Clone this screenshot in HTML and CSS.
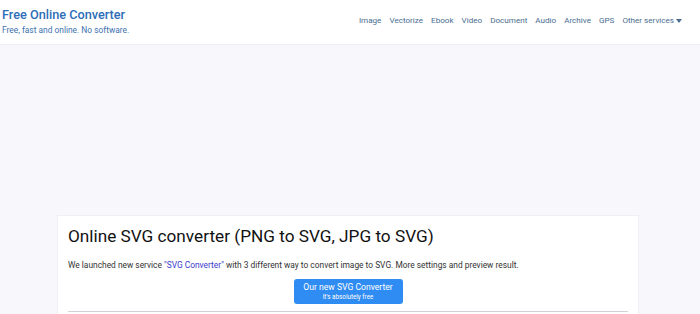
FILE: index.html
```html
<!DOCTYPE html>
<html>
<head>
<meta charset="utf-8">
<link rel="stylesheet" href="styles.css">
</head>
<body>
<header class="topbar">
  <div class="brand">
    <a class="brand-name" href="#">Free Online Converter</a>
    <div class="brand-tag">Free, fast and online. No software.</div>
  </div>
  <nav class="menu">
    <a href="#">Image</a>
    <a href="#">Vectorize</a>
    <a href="#">Ebook</a>
    <a href="#">Video</a>
    <a href="#">Document</a>
    <a href="#">Audio</a>
    <a href="#">Archive</a>
    <a href="#">GPS</a>
    <a href="#" class="dropdown">Other services<span class="caret"></span></a>
  </nav>
</header>
<div class="ad-space"></div>
<main class="card">
  <h1 class="title">Online SVG converter (PNG to SVG, JPG to SVG)</h1>
  <p class="lead">We launched new service <a href="#">"SVG Converter"</a> with 3 different way to convert image to SVG. More settings and preview result.</p>
  <div class="cta-row">
    <a class="cta" href="#">Our new SVG Converter<small>It's absolutely free</small></a>
  </div>
  <div class="divider"></div>
</main>
</body>
</html>
```
FILE: styles.css
```css
* { box-sizing: border-box; }
html, body { margin: 0; padding: 0; }
body {
  background: #f8f8fc;
  font-family: "Roboto", "Open Sans", sans-serif;
  color: #212529;
  overflow: hidden;
  height: 314px;
}
a { text-decoration: none; }
.topbar {
  height: 45px;
  background: #fff;
  border-bottom: 1px solid #eeeef4;
  display: flex;
  justify-content: space-between;
  align-items: flex-start;
  padding: 0 18px 0 2px;
}
.brand { padding-top: 6px; }
.brand-name {
  display: block;
  color: #2d6db8;
  font-size: 12.7px;
  font-weight: 500;
  line-height: 17px;
}
.brand-tag {
  color: #3d72b0;
  font-size: 8.4px;
  line-height: 12px;
  margin-top: 1px;
}
.menu {
  display: flex;
  gap: 8px;
  padding-top: 14px;
  font-size: 8.1px;
}
.menu a { color: #4a6d90; line-height: 12px; }
.caret {
  display: inline-block;
  margin-left: 2px;
  vertical-align: middle;
  border-top: 4px solid #4a6d90;
  border-left: 3px solid transparent;
  border-right: 3px solid transparent;
}
.ad-space { height: 170px; }
.card {
  margin-left: 57px;
  width: 582px;
  height: 99px;
  background: #fff;
  border: 1px solid #eeeef5;
  border-bottom: 0;
  padding: 9px 10px 0 10px;
}
.title {
  margin: 0;
  font-size: 17.2px;
  font-weight: 400;
  line-height: 22px;
  color: #111;
}
.lead {
  margin: 12px 0 0;
  font-size: 8.4px;
  line-height: 12px;
  color: #333;
}
.lead a { color: #3a3acc; }
.cta-row { display: flex; justify-content: center; margin-top: 8px; }
.cta {
  display: flex;
  flex-direction: column;
  align-items: center;
  width: 109px;
  height: 25px;
  background: #2f8cf2;
  border-radius: 3px;
  color: #fff;
  font-size: 8.6px;
  line-height: 12px;
  padding-top: 2px;
}
.cta small { font-size: 6.3px; line-height: 9px; }
.divider {
  margin-top: 7px;
  border-top: 1px solid #cfd1d6;
}
```
